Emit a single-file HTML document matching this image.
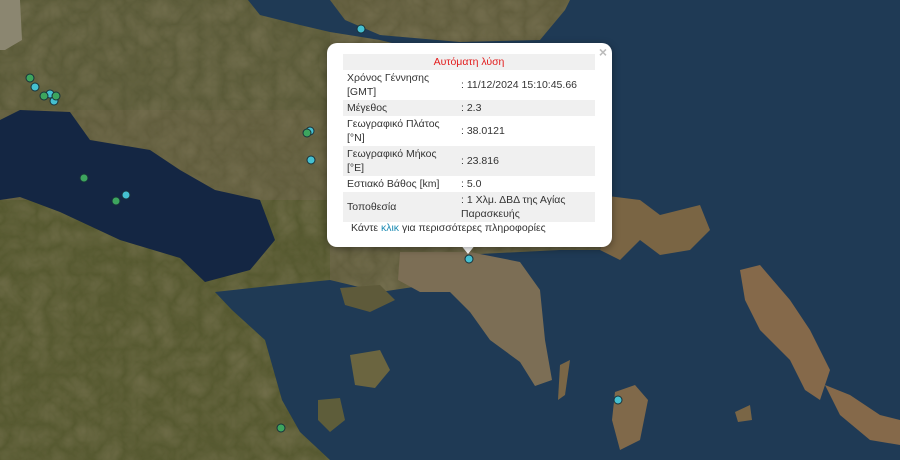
<!DOCTYPE html>
<html><head><meta charset="utf-8"><style>
body{margin:0;width:900px;height:460px;overflow:hidden;font-family:"Liberation Sans","DejaVu Sans",sans-serif;}
#map{position:absolute;left:0;top:0}
.pop{position:absolute;left:327px;top:43px;width:285px;height:204px;background:#fff;border-radius:10px;box-shadow:0 2px 8px rgba(0,0,0,.4)}
.tip{position:absolute;left:460px;top:244px;width:0;height:0;border-left:8px solid transparent;border-right:8px solid transparent;border-top:10px solid #fff}
.x{position:absolute;right:5px;top:1px;color:#bbb;font-size:14px;font-weight:bold}
table{position:absolute;left:16px;top:11px;width:252px;border-collapse:collapse;font-size:10.5px;color:#333;line-height:14px}
td{padding:1px 4px;vertical-align:middle}
tr.g td{background:#f0f0f0}
td.v{width:130px}
.h{color:#e21b1b;text-align:center;height:14px}
.more{position:absolute;left:24px;top:179px;font-size:10.5px;color:#333}
.more span{color:#1e8cb4}
</style></head><body>
<svg id="map" width="900" height="460" viewBox="0 0 900 460">
<defs><filter id="n"><feTurbulence baseFrequency="0.04" numOctaves="3" seed="4"/><feColorMatrix values="0 0 0 0 0.25  0 0 0 0 0.22  0 0 0 0 0.12  0 0 0 0.55 0"/><feComposite in2="SourceGraphic" operator="in"/></filter></defs>
<rect width="900" height="460" fill="#615d3d"/>
<rect x="0" y="200" width="330" height="260" fill="#55582f"/>
<rect x="0" y="0" width="330" height="110" fill="#5a5a38"/>
<rect width="900" height="460" fill="#000" filter="url(#n)"/>
<path d="M0,120 L20,110 L70,112 L90,140 L150,150 L180,170 L215,190 L260,200 L275,240 L250,270 L205,282 L180,258 L120,240 L60,212 L20,197 L0,200Z" fill="#142643"/>
<path d="M248,0 L330,0 L345,20 L380,35 L460,42 L540,40 L565,10 L570,0 L900,0 L900,460 L330,460 L300,432 L282,400 L265,340 L232,310 L215,292 L270,286 L330,280 L380,292 L420,286 L400,270 L460,255 L560,250 L600,250 L612,120 L560,60 L500,50 L420,50 L380,40 L330,32 L300,25 L260,15Z" fill="#1f3a55"/>
<path d="M400,252 L470,252 L520,262 L540,290 L545,340 L552,380 L535,386 L520,362 L490,340 L470,312 L450,292 L420,292 L398,280Z" fill="#7c6e55"/>
<path d="M340,288 L380,285 L395,300 L370,312 L345,305Z" fill="#5e5a3a"/>
<path d="M350,355 L380,350 L390,370 L375,388 L355,385Z" fill="#6b6540"/>
<path d="M318,400 L340,398 L345,420 L330,432 L318,420Z" fill="#5e5d3a"/>
<path d="M600,195 L640,200 L660,215 L700,205 L710,230 L690,250 L660,255 L640,240 L620,260 L600,250 L605,220Z" fill="#7a6544"/>
<path d="M740,270 L760,265 L790,300 L810,330 L830,370 L820,400 L805,390 L790,360 L760,330 L745,300Z" fill="#85694a"/>
<path d="M825,385 L850,395 L880,415 L900,420 L900,445 L870,440 L840,415Z" fill="#85694a"/>
<path d="M615,392 L635,385 L648,400 L640,440 L620,450 L612,420Z" fill="#80694a"/>
<path d="M735,412 L750,405 L752,420 L738,422Z" fill="#7a6646"/>
<path d="M560,365 L570,360 L565,395 L558,400Z" fill="#7a6646"/>
<path d="M0,0 L20,0 L22,40 L5,50 L0,50Z" fill="#8b8670"/>
<g stroke="#18323a" stroke-width="1">
<g fill="#45c0d0">
<circle cx="361" cy="29" r="4"/><circle cx="310" cy="131" r="4"/><circle cx="311" cy="160" r="4"/><circle cx="126" cy="195" r="4"/><circle cx="35" cy="87" r="4"/><circle cx="50" cy="94" r="4"/><circle cx="54" cy="101" r="4"/><circle cx="618" cy="400" r="4"/><circle cx="469" cy="259" r="4"/></g>
<g fill="#3da55e">
<circle cx="30" cy="78" r="4"/><circle cx="44" cy="96" r="4"/><circle cx="56" cy="96" r="4"/><circle cx="84" cy="178" r="4"/><circle cx="116" cy="201" r="4"/><circle cx="281" cy="428" r="4"/><circle cx="307" cy="133" r="4"/></g>
</g>
</svg>
<div class="tip"></div>
<div class="pop">
<div class="x">×</div>
<table>
<tr class="g"><td colspan="2" class="h">Αυτόματη λύση</td></tr>
<tr><td>Χρόνος Γέννησης<br>[GMT]</td><td class="v">: 11/12/2024 15:10:45.66</td></tr>
<tr class="g"><td>Μέγεθος</td><td class="v">: 2.3</td></tr>
<tr><td>Γεωγραφικό Πλάτος<br>[°N]</td><td class="v">: 38.0121</td></tr>
<tr class="g"><td>Γεωγραφικό Μήκος<br>[°E]</td><td class="v">: 23.816</td></tr>
<tr><td>Εστιακό Βάθος [km]</td><td class="v">: 5.0</td></tr>
<tr class="g"><td>Τοποθεσία</td><td class="v">: 1 Χλμ. ΔΒΔ της Αγίας Παρασκευής</td></tr>
</table>
<div class="more">Κάντε <span>κλικ</span> για περισσότερες πληροφορίες</div>
</div>
</body></html>
